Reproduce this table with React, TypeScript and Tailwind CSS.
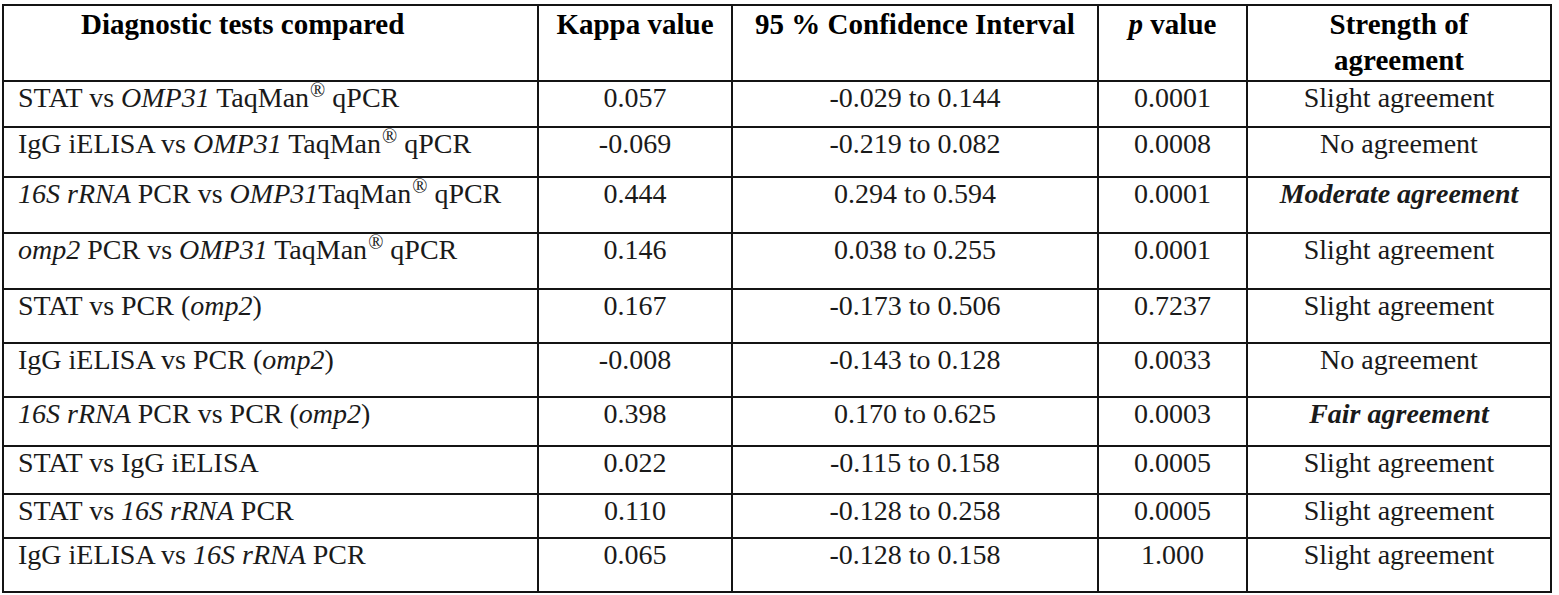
import type { ReactNode } from "react";

interface Row {
  tests: ReactNode;
  kappa: string;
  ci: string;
  p: string;
  strength: ReactNode;
  h: string;
}

const Reg = () => <sup className="ml-[1px] text-[20px] leading-none align-[0px]">®</sup>;

const rows: Row[] = [
  { tests: <>STAT vs <i>OMP31</i> TaqMan<Reg /> qPCR</>, kappa: "0.057", ci: "-0.029 to 0.144", p: "0.0001", strength: "Slight agreement", h: "h-[46px]" },
  { tests: <>IgG iELISA vs <i>OMP31</i> TaqMan<Reg /> qPCR</>, kappa: "-0.069", ci: "-0.219 to 0.082", p: "0.0008", strength: "No agreement", h: "h-[50px]" },
  { tests: <><i>16S rRNA</i> PCR vs <i>OMP31</i>TaqMan<Reg /> qPCR</>, kappa: "0.444", ci: "0.294 to 0.594", p: "0.0001", strength: <b><i>Moderate agreement</i></b>, h: "h-[56px]" },
  { tests: <><i>omp2</i> PCR vs <i>OMP31</i> TaqMan<Reg /> qPCR</>, kappa: "0.146", ci: "0.038 to 0.255", p: "0.0001", strength: "Slight agreement", h: "h-[56px]" },
  { tests: <>STAT vs PCR (<i>omp2</i>)</>, kappa: "0.167", ci: "-0.173 to 0.506", p: "0.7237", strength: "Slight agreement", h: "h-[54px]" },
  { tests: <>IgG iELISA vs PCR (<i>omp2</i>)</>, kappa: "-0.008", ci: "-0.143 to 0.128", p: "0.0033", strength: "No agreement", h: "h-[54px]" },
  { tests: <><i>16S rRNA</i> PCR vs PCR (<i>omp2</i>)</>, kappa: "0.398", ci: "0.170 to 0.625", p: "0.0003", strength: <b><i>Fair agreement</i></b>, h: "h-[49px]" },
  { tests: <>STAT vs IgG iELISA</>, kappa: "0.022", ci: "-0.115 to 0.158", p: "0.0005", strength: "Slight agreement", h: "h-[48px]" },
  { tests: <>STAT vs <i>16S rRNA</i> PCR</>, kappa: "0.110", ci: "-0.128 to 0.258", p: "0.0005", strength: "Slight agreement", h: "h-[44px]" },
  { tests: <>IgG iELISA vs <i>16S rRNA</i> PCR</>, kappa: "0.065", ci: "-0.128 to 0.158", p: "1.000", strength: "Slight agreement", h: "h-[54px]" },
];

const cell = "border-r-2 border-b-2 border-[#141414] leading-[32px] whitespace-nowrap";
const head = "border-r-2 border-b-2 border-[#141414] h-[76px] text-[29px] leading-[36px] font-bold text-black";

export default function App() {
  return (
    <div className="min-h-screen bg-white pt-[4px] pl-[2px] font-['Liberation_Serif',serif] text-[28px] text-[#1a1a1a]">
      <div className="grid w-max grid-cols-[535px_194px_366px_149px_304px] border-l-2 border-t-2 border-[#141414]">
        <div className={`${head} pl-[77px]`}>Diagnostic tests compared</div>
        <div className={`${head} text-center`}>Kappa value</div>
        <div className={`${head} text-center`}>95 % Confidence Interval</div>
        <div className={`${head} text-center`}>
          <i>p</i> value
        </div>
        <div className={`${head} text-center`}>
          Strength of
          <br />
          agreement
        </div>

        {rows.map((r, i) => (
          <div key={i} className="contents">
            <div className={`${cell} ${r.h} pl-[14px]`}>{r.tests}</div>
            <div className={`${cell} ${r.h} text-center`}>{r.kappa}</div>
            <div className={`${cell} ${r.h} text-center`}>{r.ci}</div>
            <div className={`${cell} ${r.h} text-center`}>{r.p}</div>
            <div className={`${cell} ${r.h} text-center`}>{r.strength}</div>
          </div>
        ))}
      </div>
    </div>
  );
}
